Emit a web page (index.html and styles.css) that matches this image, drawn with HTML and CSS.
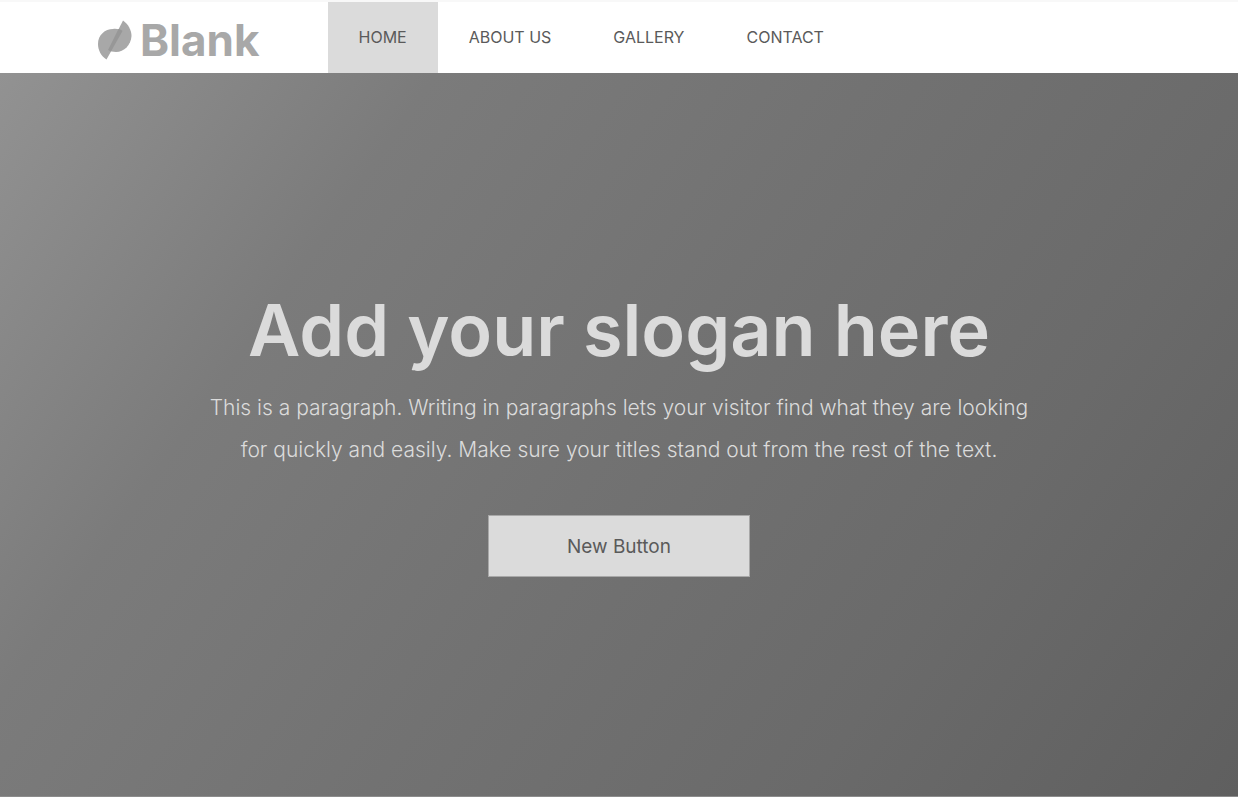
FILE: index.html
```html
<!DOCTYPE html>
<html lang="en">
<head>
<meta charset="utf-8">
<meta name="viewport" content="width=device-width, initial-scale=1">
<title>Blank</title>
<link rel="stylesheet" href="styles.css">
</head>
<body>
<header class="site-header">
  <a class="brand" href="#">
    <svg class="brand-mark" viewBox="0 0 34 40" aria-hidden="true">
      <path fill="#a8a8a8" d="M8.500 39.500C3 36 0 30 0 24C0 15 7 9 15 9C19 8.500 22 9.500 24.500 11Z"/>
      <path fill="#a8a8a8" d="M25 .5C30 4 33.500 10 33.500 16C33 25 26 32 18 32C15 32 12 31 10 30Z"/>
      <path fill="#979797" d="M20.500 9C22 9 23.500 10 24.500 11L13 31.500C12 31 11 30.500 10 30Z"/>
    </svg>
    <span class="brand-name">Blank</span>
  </a>
  <nav class="menu" aria-label="Main">
    <a class="menu-link menu-link-active" href="#home" aria-current="page">HOME</a>
    <a class="menu-link" href="#about">ABOUT US</a>
    <a class="menu-link" href="#gallery">GALLERY</a>
    <a class="menu-link" href="#contact">CONTACT</a>
  </nav>
</header>
<main class="hero">
  <h1 class="hero-title">Add your slogan here</h1>
  <p class="hero-text">This is a paragraph. Writing in paragraphs lets your visitor find what they are looking for quickly and easily. Make sure your titles stand out from the rest of the text.</p>
  <button class="hero-button" type="button">New Button</button>
</main>
</body>
</html>
```
FILE: styles.css
```css
* {
  box-sizing: border-box;
}

body {
  margin: 0;
  min-height: 100vh;
  display: flex;
  flex-direction: column;
  padding-bottom: 7px;
  background: #fff;
  font-family: Inter, "Liberation Sans", sans-serif;
}

.site-header {
  display: flex;
  align-items: stretch;
  gap: 68px;
  min-height: 73px;
  padding-left: 98px;
  border-top: 2px solid #f8f8f8;
}

.brand {
  display: flex;
  align-items: center;
  gap: 8px;
  padding-top: 4px;
  color: #a8a8a8;
  text-decoration: none;
}

.brand-mark {
  width: 34px;
  height: 40px;
}

.brand-name {
  font-size: 44px;
  line-height: 48px;
  font-weight: 700;
}

.menu {
  display: flex;
}

.menu-link {
  display: flex;
  align-items: center;
  padding: 0 31px 2px;
  font-size: 16px;
  line-height: 24px;
  color: #5a5a5a;
  text-decoration: none;
}

.menu-link-active {
  background: #dbdbdb;
}

.hero {
  flex: 1;
  display: flex;
  flex-direction: column;
  align-items: center;
  justify-content: center;
  padding: 0 24px 6px;
  text-align: center;
  color: #dbdbdb;
  border-bottom: 1px solid #8c8c8c;
  background: linear-gradient(125deg, #929292 0%, #7b7b7b 25%, #727272 50%, #6a6a6a 75%, #5f5f5f 100%);
}

.hero-title {
  margin: 0;
  font-size: 72px;
  line-height: 88px;
  font-weight: 600;
}

.hero-text {
  max-width: 840px;
  margin: 13px 0 44px;
  font-size: 21px;
  line-height: 42px;
  font-weight: 300;
}

.hero-button {
  width: 262px;
  height: 62px;
  border: 1px solid #a8a8a8;
  background: #dbdbdb;
  color: #5a5a5a;
  font-family: inherit;
  font-size: 19px;
}
```
